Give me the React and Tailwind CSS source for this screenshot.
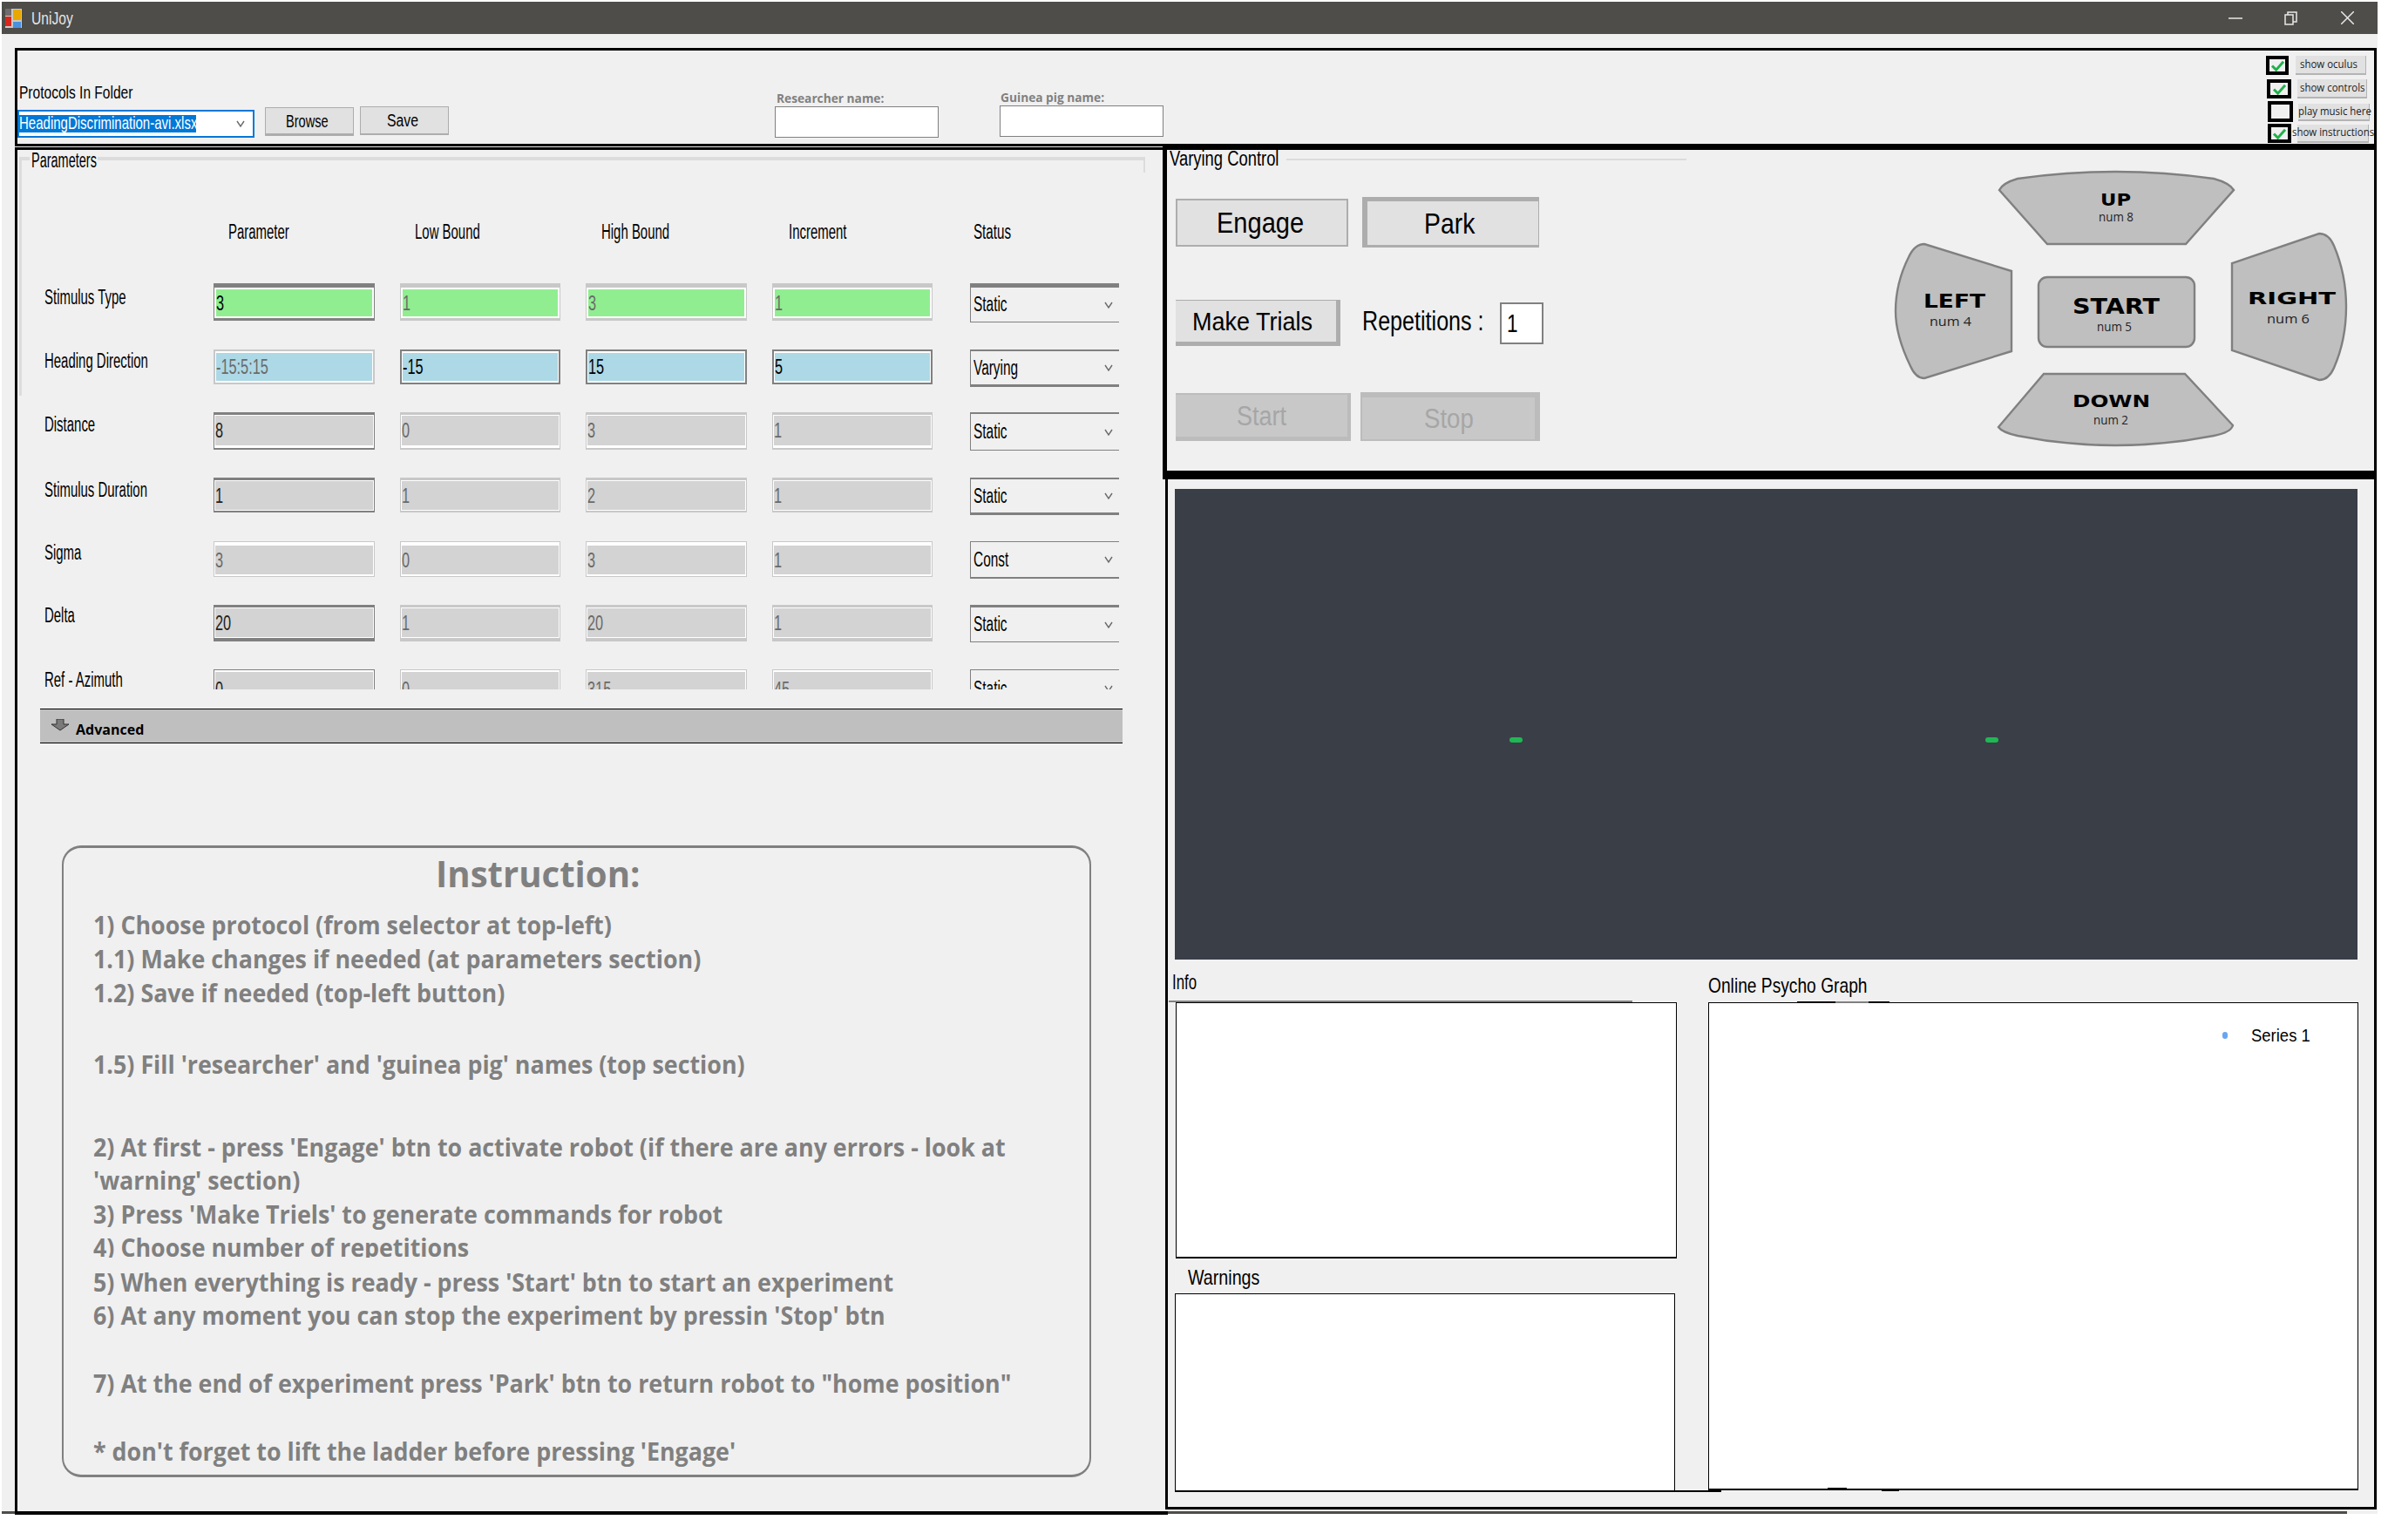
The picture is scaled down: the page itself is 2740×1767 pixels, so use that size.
import React from "react";

const T = ({ className = "", children }) => (
  <span className={"block w-fit origin-left whitespace-nowrap leading-none " + className}>{children}</span>
);

const D = "border-[#808080]";
const L = "border-[#c8c8c8]";

const ROWS = [
  { label: "Stimulus Type", h: "h-[76px]", lab: "mt-[5px]", outer: "h-[43px] border-x border-t-[5px] border-b-[3px]", inner: "border-2 border-white", fill: "bg-[#90ee90]", tones: [D, L, L, L], vals: ["3", "1", "3", "1"], ink: ["text-black", "text-[#6a6a6a]", "text-[#6a6a6a]", "text-[#6a6a6a]"], status: "Static", combo: "h-[45px] border-l border-t-[5px] border-b" },
  { label: "Heading Direction", h: "h-[72px]", lab: "mt-[2px]", outer: "h-[40px] border-x-2 border-y-2", inner: "border-x-[1px] border-y-[2px] border-white", fill: "bg-[#add8e6]", tones: [L, D, D, D], vals: ["-15:5:15", "-15", "15", "5"], ink: ["text-[#6a6a6a]", "text-black", "text-black", "text-black"], status: "Varying", combo: "h-[43px] border-l border-t-2 border-b-[3px]" },
  { label: "Distance", h: "h-[75px]", lab: "mt-[3px]", outer: "h-[43px] border-x border-t-[3px] border-b-2", inner: "border-t-[1px] border-b-[3px] border-x border-white", fill: "bg-[#d3d3d3]", tones: [D, L, L, L], vals: ["8", "0", "3", "1"], ink: ["text-[#222]", "text-[#6a6a6a]", "text-[#6a6a6a]", "text-[#6a6a6a]"], status: "Static", combo: "h-[44px] border-l border-t-2 border-b" },
  { label: "Stimulus Duration", h: "h-[73px]", lab: "mt-[3px]", outer: "h-[40px] border-x border-t-[3px] border-b-2", inner: "border border-white", fill: "bg-[#d3d3d3]", tones: [D, L, L, L], vals: ["1", "1", "2", "1"], ink: ["text-[#222]", "text-[#6a6a6a]", "text-[#6a6a6a]", "text-[#6a6a6a]"], status: "Static", combo: "h-[43px] border-l border-t-2 border-b-[3px]" },
  { label: "Sigma", h: "h-[73px]", lab: "mt-[2px]", outer: "h-[41px] border border-b", inner: "border-t-[4px] border-b-[2px] border-x border-white", fill: "bg-[#d3d3d3]", tones: [L, L, L, L], vals: ["3", "0", "3", "1"], ink: ["text-[#6a6a6a]", "text-[#6a6a6a]", "text-[#6a6a6a]", "text-[#6a6a6a]"], status: "Const", combo: "h-[43px] border-l border-t border-b-2" },
  { label: "Delta", h: "h-[74px]", lab: "mt-[1px]", outer: "h-[42px] border-x border-t-[3px] border-b-[4px]", inner: "border border-white", fill: "bg-[#d3d3d3]", tones: [D, L, L, L], vals: ["20", "1", "20", "1"], ink: ["text-[#222]", "text-[#6a6a6a]", "text-[#6a6a6a]", "text-[#6a6a6a]"], status: "Static", combo: "h-[43px] border-l border-t-[3px] border-b" },
  { label: "Ref - Azimuth", h: "h-[23px]", lab: "mt-[1px]", outer: "h-[43px] border-x border-t", inner: "border-t-[2px] border-x border-white", fill: "bg-[#d3d3d3]", tones: [D, L, L, L], vals: ["0", "0", "315", "45"], ink: ["text-[#222]", "text-[#6a6a6a]", "text-[#6a6a6a]", "text-[#6a6a6a]"], status: "Static", combo: "h-[43px] border-l border-t" },
];

const WIDTHS = ["w-[185px]", "w-[184px]", "w-[185px]", "w-[184px]"];

const Chevron = ({ className = "" }) => (
  <svg viewBox="0 0 10 10" className={"w-[10px] h-[10px] " + className}>
    <polyline points="1,2 5,8 9,2" fill="none" stroke="#6a6a6a" strokeWidth="1.4" />
  </svg>
);

const ParamRow = ({ r }) => (
  <div className={"flex items-start gap-[29px] pl-[29px] overflow-visible " + r.h}>
    <div className={"w-[165px] " + r.lab}>
      <T className="text-[23px] scale-x-[0.65] text-black">{r.label}</T>
    </div>
    {r.vals.map((v, i) => (
      <div key={i} className={"shrink-0 " + WIDTHS[i] + " " + r.outer + " " + r.tones[i]}>
        <div className={"h-full flex items-center overflow-hidden " + r.fill + " " + r.inner}>
          <T className={"text-[24px] scale-x-[0.68] " + r.ink[i]}>{v}</T>
        </div>
      </div>
    ))}
    <div className={"ml-[14px] w-[171px] shrink-0 flex items-center justify-between pl-[3px] pr-[7px] border-[#808080] " + r.combo}>
      <T className="text-[23px] scale-x-[0.67] text-black">{r.status}</T>
      <Chevron />
    </div>
  </div>
);

const Check = ({ className, checked }) => (
  <div className={"shrink-0 flex items-center justify-center border-[4px] border-black " + className}>
    {checked && (
      <svg viewBox="0 0 16 14" className="w-[17px] h-[13px]">
        <polyline points="1,7 6,12 15,2" fill="none" stroke="#22b14c" strokeWidth="3.2" />
      </svg>
    )}
  </div>
);

const Toggle = ({ className, text, tc }) => (
  <div className={"shrink-0 bg-[#e1e1e1] border-b-2 border-r border-[#b4b4b4] flex items-center pb-[2px] " + className}>
    <T className={"font-['Open_Sans'] text-[13px] text-[#222] " + tc}>{text}</T>
  </div>
);

const LINES = [
  { t: "1) Choose protocol (from selector at top-left)", c: "mt-[19px] h-[38px]" },
  { t: "1.1) Make changes if needed (at parameters section)", c: "mt-[1px] h-[38px]" },
  { t: "1.2) Save if needed (top-left button)", c: "mt-[1px] h-[38px]" },
  { t: "1.5) Fill 'researcher' and 'guinea pig' names (top section)", c: "mt-[44px] h-[38px]" },
  { t: "2) At first - press 'Engage' btn to activate robot (if there are any errors - look at", c: "mt-[57px] h-[38px]" },
  { t: "'warning' section)", c: "h-[38px]" },
  { t: "3) Press 'Make Triels' to generate commands for robot", c: "mt-[1px] h-[38px]" },
  { t: "4) Choose number of repetitions", c: "h-[31px]" },
  { t: "5) When everything is ready - press 'Start' btn to start an experiment", c: "mt-[9px] h-[38px]" },
  { t: "6) At any moment you can stop the experiment by pressin 'Stop' btn", c: "h-[38px]" },
  { t: "7) At the end of experiment press 'Park' btn to return robot to \"home position\"", c: "mt-[40px] h-[38px]" },
  { t: "* don't forget to lift the ladder before pressing 'Engage'", c: "mt-[40px] h-[38px]" },
];

const DPad = () => (
  <svg viewBox="2165 190 540 340" className="w-[540px] h-[340px] shrink-0 mt-[18px]">
    <g fill="#bfbfbf" stroke="#808080" strokeWidth="2.4">
      <path d="M2294 218 Q2298 210 2315 205 Q2427 189 2540 205 Q2558 210 2563 218 L2508 280 L2349 280 Z" />
      <path d="M2345 429 L2507 429 L2562 488 Q2560 496 2540 500 Q2427 522 2315 500 Q2297 496 2293 490 Z" />
      <path d="M2308 311 L2308 403 L2208 434 Q2198 434 2192 420 Q2175 385 2175 357 Q2175 325 2190 295 Q2197 280 2208 280 Z" />
      <path d="M2561 302 L2561 402 L2661 436 Q2672 436 2678 422 Q2692 390 2692 352 Q2692 315 2678 282 Q2672 268 2661 268 Z" />
      <rect x="2339" y="318" width="179" height="80" rx="10" />
    </g>
    <g fontFamily="DejaVu Sans" fontWeight="700" fill="#000">
      <text x="2410" y="236" fontSize="20" textLength="35" lengthAdjust="spacingAndGlyphs">UP</text>
      <text x="2207" y="353" fontSize="21" textLength="71" lengthAdjust="spacingAndGlyphs">LEFT</text>
      <text x="2378" y="360" fontSize="24" textLength="100" lengthAdjust="spacingAndGlyphs">START</text>
      <text x="2579" y="349" fontSize="20" textLength="101" lengthAdjust="spacingAndGlyphs">RIGHT</text>
      <text x="2378" y="467" fontSize="20" textLength="89" lengthAdjust="spacingAndGlyphs">DOWN</text>
    </g>
    <g fontFamily="Open Sans" fill="#222">
      <text x="2408" y="254" fontSize="14" textLength="40" lengthAdjust="spacingAndGlyphs">num 8</text>
      <text x="2214" y="374" fontSize="15" textLength="48" lengthAdjust="spacingAndGlyphs">num 4</text>
      <text x="2406" y="380" fontSize="14" textLength="40" lengthAdjust="spacingAndGlyphs">num 5</text>
      <text x="2601" y="371" fontSize="15" textLength="49" lengthAdjust="spacingAndGlyphs">num 6</text>
      <text x="2402" y="487" fontSize="14" textLength="40" lengthAdjust="spacingAndGlyphs">num 2</text>
    </g>
  </svg>
);

export default function App() {
  return (
    <div className="w-[2740px] h-[1767px] bg-white pl-[2px] pt-[2px] font-['Liberation_Sans',sans-serif] overflow-hidden">
      <div className="relative w-[2726px] h-[1735px] bg-[#f0f0f0] border-b-[3px] border-[#4e4d4a]">
        {/* title bar */}
        <div className="h-[37px] bg-[#4e4d4a] flex items-center pl-[4px]">
          <svg viewBox="0 0 19 22" className="w-[19px] h-[22px] shrink-0">
            <rect width="19" height="22" fill="#c8c8c8" />
            <rect x="0" y="0" width="7" height="8" fill="#6d6d6d" />
            <rect x="0" y="9" width="7" height="11" fill="#d9261c" />
            <rect x="9" y="1" width="9" height="12" fill="#e8a800" />
            <rect x="9" y="15" width="9" height="7" fill="#4a90e0" />
          </svg>
          <T className="ml-[11px] text-[20px] scale-x-[0.78] text-[#e6e6e6]">UniJoy</T>
          <div className="ml-auto flex items-center pr-[27px]">
            <svg viewBox="0 0 16 16" className="w-[16px] h-[16px]"><path d="M0 8 H16" stroke="#e8e8e8" strokeWidth="1.5" /></svg>
            <svg viewBox="0 0 15 16" className="w-[15px] h-[16px] ml-[48px]" fill="none" stroke="#e8e8e8" strokeWidth="1.5">
              <rect x="1" y="4" width="9" height="11" /><path d="M4 4 V1 H14 V12 H10" />
            </svg>
            <svg viewBox="0 0 15 15" className="w-[15px] h-[15px] ml-[50px]" fill="none" stroke="#e8e8e8" strokeWidth="1.5">
              <path d="M0 0 L15 15 M15 0 L0 15" />
            </svg>
          </div>
        </div>

        <div className="pt-[16px] pl-[15px]">
          {/* top strip */}
          <div className="w-[2710px] h-[113px] border-[3px] border-black flex items-start">
            <div className="w-[272px] shrink-0 pt-[37px]">
              <T className="ml-[2px] text-[21px] scale-x-[0.74] text-black">Protocols In Folder</T>
              <div className="mt-[10px] h-[32px] border-2 border-[#0078d7] bg-white flex items-center justify-between pl-0 pr-[9px]">
                <div className="w-[203px] h-[20px] bg-[#0078d7] flex items-center pb-[3px]">
                  <T className="text-[21px] scale-x-[0.715] text-white">HeadingDiscrimination-avi.xlsx</T>
                </div>
                <Chevron />
              </div>
            </div>
            <div className="ml-[12px] mt-[65px] w-[102px] h-[33px] shrink-0 bg-[#e1e1e1] border border-b-[3px] border-[#adadad] flex items-center pl-[23px]">
              <T className="text-[20px] scale-x-[0.73] text-black">Browse</T>
            </div>
            <div className="ml-[7px] mt-[64px] w-[102px] h-[33px] shrink-0 bg-[#e1e1e1] border border-b-2 border-[#adadad] flex items-center pl-[30px]">
              <T className="text-[20px] scale-x-[0.79] text-black">Save</T>
            </div>
            <div className="ml-[374px] w-[188px] shrink-0 pt-[49px]">
              <T className="ml-[2px] font-['Open_Sans'] font-bold text-[14px] scale-x-[0.98] -translate-y-[1px] text-[#808080] h-[15px]">Researcher name:</T>
              <div className="h-[36px] bg-white border border-[#808080]" />
            </div>
            <div className="ml-[70px] w-[188px] shrink-0 pt-[48px]">
              <T className="ml-[1px] font-['Open_Sans'] font-bold text-[14px] scale-x-[0.98] -translate-y-[1px] text-[#808080] h-[15px]">Guinea pig name:</T>
              <div className="h-[36px] bg-white border border-[#808080]" />
            </div>
            <div className="ml-auto w-[124px] shrink-0 pt-[6px] flex flex-col">
              <div className="flex items-start">
                <Check checked className="w-[26px] h-[22px]" />
                <Toggle className="ml-[8px] w-[81px] h-[22px] pl-[5px]" text="show oculus" tc="scale-x-[0.88]" />
              </div>
              <div className="flex items-start ml-[1px] mt-[5px]">
                <Check checked className="w-[28px] h-[22px]" />
                <Toggle className="ml-[7px] w-[80px] h-[22px] pl-[3px]" text="show controls" tc="scale-x-[0.88]" />
              </div>
              <div className="flex items-start ml-[2px] mt-[3px]">
                <Check className="w-[29px] h-[24px]" />
                <Toggle className="ml-[6px] mt-[3px] w-[82px] h-[20px]" text="play music here" tc="scale-x-[0.88]" />
              </div>
              <div className="flex items-start ml-[2px] mt-[2px]">
                <Check checked className="w-[27px] h-[22px]" />
                <Toggle className="ml-[7px] mt-[1px] w-[82px] h-[21px]" text="show instructions" tc="-translate-x-[6px] scale-x-[0.88]" />
              </div>
            </div>
          </div>

          <div className="flex items-start mt-[1px]">
            {/* left panel */}
            <div className="relative w-[1323px] h-[1569px] shrink-0 border-t-[3px] border-l-[3px] border-b-[4px] border-black">
              <div className="relative ml-[2px] mt-[8px] w-[1292px] border-t-[4px] border-[#dcdcdc]">
                <div className="absolute left-0 top-0 w-[3px] h-[270px] bg-[#dcdcdc]" />
                <div className="absolute right-0 top-0 w-[2px] h-[14px] bg-[#dcdcdc]" />
                <div className="absolute left-[12px] -top-[11px] w-[78px] h-[22px] bg-[#f0f0f0] flex items-center pl-[2px]">
                  <T className="text-[23px] scale-x-[0.63] text-black">Parameters</T>
                </div>
                <div className="h-[607px] -mr-[10px] overflow-hidden">
                  <div className="h-[141px] pt-[71px] flex">
                    <div className="ml-[240px] w-[214px]"><T className="text-[23px] scale-x-[0.65] text-black">Parameter</T></div>
                    <div className="w-[214px]"><T className="text-[23px] scale-x-[0.65] text-black">Low Bound</T></div>
                    <div className="w-[215px]"><T className="text-[23px] scale-x-[0.65] text-black">High Bound</T></div>
                    <div className="w-[212px]"><T className="text-[23px] scale-x-[0.65] text-black">Increment</T></div>
                    <div><T className="text-[23px] scale-x-[0.66] text-black">Status</T></div>
                  </div>
                  {ROWS.map((r) => <ParamRow key={r.label} r={r} />)}
                </div>
              </div>

              <div className="ml-[26px] mt-[22px] w-[1242px] h-[40px] bg-[#bfbfbf] border-y border-black flex items-center pl-[12px] pt-[7px]">
                <svg viewBox="0 0 22 14" className="w-[22px] h-[14px] -mt-[10px]">
                  <path d="M7 0 H15 V6 H21 L11 13 L1 6 H7 Z" fill="#7a7a7a" stroke="#333" strokeWidth="1" />
                </svg>
                <T className="ml-[7px] font-['Open_Sans'] font-bold text-[16px] text-black">Advanced</T>
              </div>

              <div className="ml-[51px] mt-[117px] w-[1181px] h-[725px] border-x-[2px] border-t-[3px] border-b-[3px] border-[#808080] rounded-[22px] font-['Open_Sans'] font-bold text-[#808080] pl-[34px] pt-[8px]">
                <div className="h-[42px] pl-[393px]">
                  <T className="text-[42px] scale-x-[0.955]">Instruction:</T>
                </div>
                {LINES.map((l) => (
                  <div key={l.t} className={"overflow-hidden whitespace-nowrap " + l.c}>
                    <span className="inline-block origin-left scale-x-[0.958] text-[28px] leading-[38px]">{l.t}</span>
                  </div>
                ))}
              </div>
            </div>

            {/* right column */}
            <div className="relative z-10 -ml-[6px] -mt-[2px] w-[1393px] shrink-0">
              <div className="h-[383px] border-l-[5px] border-r-[3px] border-t-[5px] border-b-[10px] border-black flex">
                <div className="w-[826px] shrink-0">
                  <div className="h-[21px] pl-[3px] flex items-center">
                    <div className="w-[134px]"><T className="text-[23px] scale-x-[0.8] text-black">Varying Control</T></div>
                    <div className="w-[459px] h-[2px] bg-[#dcdcdc]" />
                  </div>
                  <div className="ml-[10px] mt-[33px] flex items-start">
                    <div className="mt-[2px] w-[198px] h-[55px] bg-[#e1e1e1] border-2 border-[#adadad] flex items-center pl-[45px]">
                      <T className="text-[33px] scale-x-[0.88] text-black">Engage</T>
                    </div>
                    <div className="ml-[16px] w-[203px] h-[58px] bg-[#e1e1e1] border-[#adadad] border-l-[6px] border-t-[5px] border-r border-b-[3px] flex items-center pl-[65px]">
                      <T className="text-[33px] scale-x-[0.86] text-black">Park</T>
                    </div>
                  </div>
                  <div className="ml-[10px] mt-[60px] flex items-start">
                    <div className="w-[189px] h-[53px] bg-[#e1e1e1] border-[#adadad] border-t border-r-[5px] border-b-[5px] flex items-center pl-[19px]">
                      <T className="text-[30px] scale-x-[0.9] text-black">Make Trials</T>
                    </div>
                    <div className="ml-[25px] w-[158px] mt-[9px]">
                      <T className="text-[31px] scale-x-[0.81] text-black">Repetitions :</T>
                    </div>
                    <div className="mt-[3px] w-[50px] h-[48px] bg-white border-2 border-[#808080] flex items-center pl-[6px]">
                      <T className="text-[30px] scale-x-[0.75] text-black">1</T>
                    </div>
                  </div>
                  <div className="ml-[10px] mt-[53px] flex items-start">
                    <div className="mt-[1px] w-[201px] h-[55px] bg-[#c8c8c8] border-[#bcbcbc] border-t-2 border-r-[4px] border-b-[5px] flex items-center pl-[70px]">
                      <T className="text-[31px] scale-x-[0.87] text-[#a6a6a6]">Start</T>
                    </div>
                    <div className="ml-[11px] w-[206px] h-[56px] bg-[#c8c8c8] border-[#bcbcbc] border-t-[6px] border-l-2 border-r-[6px] border-b-2 flex items-center pl-[71px]">
                      <T className="text-[31px] scale-x-[0.89] text-[#a6a6a6]">Stop</T>
                    </div>
                  </div>
                </div>
                <DPad />
              </div>

              <div className="ml-[3px] h-[1182px] pt-[11px] border-l-[3px] border-r-[3px] border-b-[3px] border-black">
                <div className="relative ml-[8px] w-[1357px] h-[540px] bg-[#3a3e47]">
                  <div className="absolute left-[384px] top-[285px] w-[15px] h-[6px] rounded-full bg-[#1fb854]" />
                  <div className="absolute left-[930px] top-[285px] w-[15px] h-[6px] rounded-full bg-[#1fb854]" />
                </div>
                <div className="flex items-start">
                  <div className="w-[620px] shrink-0 pt-[14px]">
                    <div className="ml-[5px]"><T className="text-[24px] scale-x-[0.7] text-black">Info</T></div>
                    <div className="mt-[9px] ml-[1px] w-[532px] h-[2px] bg-[#808080]" />
                    <div className="ml-[9px] w-[575px] h-[294px] bg-white border border-b-2 border-black" />
                    <div className="mt-[10px] ml-[23px]"><T className="text-[24px] scale-x-[0.82] text-black">Warnings</T></div>
                    <div className="mt-[6px] ml-[8px] w-[574px] h-[226px] bg-white border border-b-0 border-black" />
                    <div className="ml-[8px] w-[627px] h-[2px] bg-black" />
                  </div>
                  <div className="w-[746px] shrink-0 pt-[18px]">
                    <div className="h-[31px]"><T className="text-[24px] scale-x-[0.8] text-black">Online Psycho Graph</T></div>
                    <div className="relative h-[560px] bg-white border border-b-2 border-black">
                      <div className="absolute left-[101px] -top-[2px] w-[44px] h-[2px] bg-black" />
                      <div className="absolute left-[145px] -top-[2px] w-[38px] h-[2px] bg-[#808080]" />
                      <div className="absolute left-[183px] -top-[2px] w-[24px] h-[2px] bg-black" />
                      <div className="absolute left-[136px] -bottom-[1px] w-[22px] h-[2px] bg-black" />
                      <div className="absolute left-[198px] -bottom-[3px] w-[20px] h-[2px] bg-black" />
                      <div className="flex justify-end items-center pt-[26px] pr-[54px]">
                        <div className="w-[6px] h-[8px] rounded-full bg-[#6aa5f0] mr-[27px]" />
                        <div className="w-[68px]"><T className="text-[21px] scale-x-[0.88] text-black">Series 1</T></div>
                      </div>
                    </div>
                  </div>
                </div>
              </div>
            </div>
          </div>
        </div>
        <div className="absolute right-0 -bottom-[3px] w-[35px] h-[4px] bg-[#f0f0f0]" />
      </div>
    </div>
  );
}
